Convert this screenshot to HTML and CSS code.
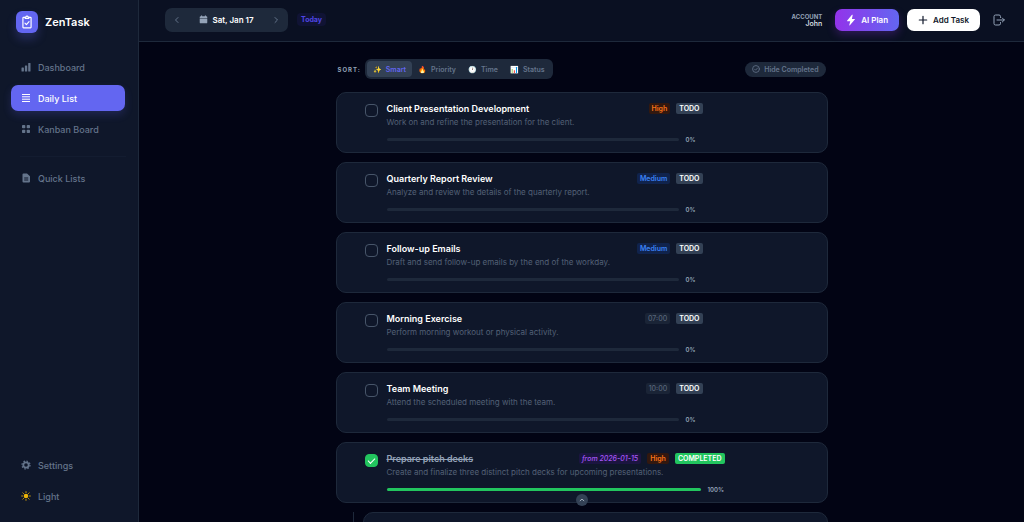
FILE: index.html
```html
<!DOCTYPE html>
<html lang="en">
<head>
  <meta charset="UTF-8">
  <meta name="viewport" content="width=device-width, initial-scale=1.0">
  <title>ZenTask</title>
  <link rel="stylesheet" href="styles.css">
</head>
<body>
  <div class="app">
    <aside class="sidebar">
      <div class="brand">
        <span class="logo">
          <svg viewBox="0 0 24 24" width="14" height="14" fill="none" stroke="currentColor" stroke-width="2" stroke-linecap="round" stroke-linejoin="round"><path d="M9 4H6a1 1 0 0 0-1 1v16a1 1 0 0 0 1 1h12a1 1 0 0 0 1-1V5a1 1 0 0 0-1-1h-3"/><path d="M9 6V3.500h1.500a1.500 1.500 0 0 1 3 0H15V6z"/><path d="M8.500 14l2.500 2.500 4.500-5"/></svg>
        </span>
        <span class="brand-name">ZenTask</span>
      </div>
      <nav class="nav">
        <a href="#" class="nav-item">
          <svg viewBox="0 0 10 10" width="10" height="10" fill="currentColor"><rect x="0.500" y="5.500" width="2.400" height="4" rx="0.500"/><rect x="3.900" y="3.500" width="2.300" height="6" rx="0.500"/><rect x="7.200" y="1" width="2.300" height="8.500" rx="0.500"/></svg>
          Dashboard
        </a>
        <a href="#" class="nav-item active">
          <svg viewBox="0 0 10 10" width="10" height="10" stroke="currentColor" stroke-width="1"><path d="M1 1.500h8M1 3.800h8M1 6.200h8M1 8.500h8"/></svg>
          Daily List
        </a>
        <a href="#" class="nav-item">
          <svg viewBox="0 0 10 10" width="10" height="10" fill="currentColor"><rect x="1" y="1" width="3.300" height="3.300" rx="0.800"/><rect x="5.700" y="1" width="3.300" height="3.300" rx="0.800"/><rect x="1" y="5.700" width="3.300" height="3.300" rx="0.800"/><rect x="5.700" y="5.700" width="3.300" height="3.300" rx="0.800"/></svg>
          Kanban Board
        </a>
        <hr class="nav-line">
        <a href="#" class="nav-item">
          <svg viewBox="0 0 10 10" width="10" height="10" fill="currentColor"><path fill-rule="evenodd" d="M2.500.5H6L9 3.300V8.500a1 1 0 0 1-1 1H2.500a1 1 0 0 1-1-1v-7a1 1 0 0 1 1-1zM3.200 4.500v.9h4v-.9zM3.200 6.600v.9h4v-.9z"/></svg>
          Quick Lists
        </a>
      </nav>
      <div class="nav nav-bottom">
        <a href="#" class="nav-item">
          <svg viewBox="0 0 10 10" width="10" height="10" fill="none" stroke="currentColor"><circle cx="5" cy="5" r="2.700" stroke-width="1.800"/><circle cx="5" cy="5" r="4" stroke-width="1.200" stroke-dasharray="1.570 1.570"/></svg>
          Settings
        </a>
        <button type="button" class="nav-item">
          <svg class="sun" viewBox="0 0 10 10" width="10" height="10" fill="currentColor" stroke="currentColor" stroke-linecap="round"><circle cx="5" cy="5" r="2.300" stroke="none"/><path stroke-width="0.900" d="M5 .7v.8M5 8.500v.8M.7 5h.8M8.500 5h.8M1.900 1.900l.6.6M7.500 7.500l.6.6M1.900 8.100l.6-.6M7.500 2.500l.6-.6"/></svg>
          Light
        </button>
      </div>
    </aside>

    <div class="page">
      <header class="topbar">
        <div class="date-picker">
          <button type="button" class="arrow" aria-label="Previous day"><svg viewBox="0 0 8 8" width="8" height="8" fill="none" stroke="currentColor" stroke-linecap="round" stroke-linejoin="round"><path d="M5 1.500L2.500 4 5 6.500"/></svg></button>
          <button type="button" class="date">
            <svg viewBox="0 0 10 10" width="9" height="9" fill="currentColor"><path d="M2.200.5h1.300v1h3v-1h1.300v1h.4a1 1 0 0 1 1 1v.9H.8v-.9a1 1 0 0 1 1-1h.4zM.8 3.800h8.400v4.500a1 1 0 0 1-1 1H1.800a1 1 0 0 1-1-1z"/></svg>
            Sat, Jan 17
          </button>
          <button type="button" class="arrow" aria-label="Next day"><svg viewBox="0 0 8 8" width="8" height="8" fill="none" stroke="currentColor" stroke-linecap="round" stroke-linejoin="round"><path d="M3 1.500L5.500 4 3 6.500"/></svg></button>
        </div>
        <button type="button" class="today">Today</button>
        <div class="account">
          <span class="account-label">ACCOUNT</span>
          <span class="account-name">John</span>
        </div>
        <button type="button" class="btn btn-ai">
          <svg viewBox="0 0 10 12" width="10" height="12" fill="currentColor"><path d="M6 .8L1.200 6.500c-.3.400-.1.700.3.700h2.700l-.9 3.900c0 .4.300.5.600.2l4.900-5.700c.3-.4.100-.7-.3-.7H5.900L6.700 1.100C6.700.7 6.300.5 6 .8z"/></svg>
          AI Plan
        </button>
        <button type="button" class="btn btn-add">
          <svg viewBox="0 0 10 10" width="10" height="10" stroke="currentColor" stroke-width="1.200" stroke-linecap="round"><path d="M5 1.300v7.400M1.300 5h7.400"/></svg>
          Add Task
        </button>
        <button type="button" class="logout" aria-label="Log out">
          <svg viewBox="0 0 12 12" width="12" height="12" fill="none" stroke="currentColor" stroke-linecap="round" stroke-linejoin="round"><path d="M7.500 3.500V2.500a1.500 1.500 0 0 0-1.500-1.500H2.500A1.500 1.500 0 0 0 1 2.500v7A1.500 1.500 0 0 0 2.500 11H6a1.500 1.500 0 0 0 1.500-1.500v-1M4 6h7.300M9.300 4l2 2-2 2"/></svg>
        </button>
      </header>

      <main class="content">
        <div class="toolbar">
          <span class="sort-label">SORT:</span>
          <div class="sort">
            <button type="button" class="sort-btn selected"><span>✨</span>Smart</button>
            <button type="button" class="sort-btn"><span>🔥</span>Priority</button>
            <button type="button" class="sort-btn"><span>🕐</span>Time</button>
            <button type="button" class="sort-btn"><span>📊</span>Status</button>
          </div>
          <button type="button" class="hide-done">
            <svg viewBox="0 0 10 10" width="8" height="8" fill="none" stroke="currentColor" stroke-linecap="round" stroke-linejoin="round"><circle cx="5" cy="5" r="4.300"/><path d="M3.200 5.200l1.300 1.300 2.400-2.700"/></svg>
            Hide Completed
          </button>
        </div>

        <div class="task">
          <input type="checkbox" class="check" id="t1">
          <div class="task-body">
            <div class="task-head">
              <label class="task-title" for="t1">Client Presentation Development</label>
              <span class="tag high">High</span>
              <span class="tag status">TODO</span>
            </div>
            <p class="task-text">Work on and refine the presentation for the client.</p>
            <div class="progress"><div class="track"></div><span class="percent">0%</span></div>
          </div>
        </div>

        <div class="task">
          <input type="checkbox" class="check" id="t2">
          <div class="task-body">
            <div class="task-head">
              <label class="task-title" for="t2">Quarterly Report Review</label>
              <span class="tag medium">Medium</span>
              <span class="tag status">TODO</span>
            </div>
            <p class="task-text">Analyze and review the details of the quarterly report.</p>
            <div class="progress"><div class="track"></div><span class="percent">0%</span></div>
          </div>
        </div>

        <div class="task">
          <input type="checkbox" class="check" id="t3">
          <div class="task-body">
            <div class="task-head">
              <label class="task-title" for="t3">Follow-up Emails</label>
              <span class="tag medium">Medium</span>
              <span class="tag status">TODO</span>
            </div>
            <p class="task-text">Draft and send follow-up emails by the end of the workday.</p>
            <div class="progress"><div class="track"></div><span class="percent">0%</span></div>
          </div>
        </div>

        <div class="task">
          <input type="checkbox" class="check" id="t4">
          <div class="task-body">
            <div class="task-head">
              <label class="task-title" for="t4">Morning Exercise</label>
              <span class="tag time">07:00</span>
              <span class="tag status">TODO</span>
            </div>
            <p class="task-text">Perform morning workout or physical activity.</p>
            <div class="progress"><div class="track"></div><span class="percent">0%</span></div>
          </div>
        </div>

        <div class="task">
          <input type="checkbox" class="check" id="t5">
          <div class="task-body">
            <div class="task-head">
              <label class="task-title" for="t5">Team Meeting</label>
              <span class="tag time">10:00</span>
              <span class="tag status">TODO</span>
            </div>
            <p class="task-text">Attend the scheduled meeting with the team.</p>
            <div class="progress"><div class="track"></div><span class="percent">0%</span></div>
          </div>
        </div>

        <div class="task done">
          <input type="checkbox" class="check" id="t6" checked>
          <div class="task-body">
            <div class="task-head">
              <label class="task-title" for="t6">Prepare pitch decks</label>
              <span class="tag from">from 2026-01-15</span>
              <span class="tag high">High</span>
              <span class="tag status">COMPLETED</span>
            </div>
            <p class="task-text">Create and finalize three distinct pitch decks for upcoming presentations.</p>
            <div class="progress"><div class="track"><div class="fill" style="width: 100%"></div></div><span class="percent">100%</span></div>
          </div>
          <button type="button" class="collapse" aria-label="Collapse subtasks"><svg viewBox="0 0 8 8" width="6" height="6" fill="none" stroke="currentColor" stroke-linecap="round" stroke-linejoin="round"><path d="M1.500 5L4 2.800 6.500 5"/></svg></button>
        </div>

        <div class="subtasks">
          <div class="task"></div>
        </div>
      </main>
    </div>
  </div>
</body>
</html>
```
FILE: styles.css
```css
* {
  box-sizing: border-box;
}
body {
  margin: 0;
  background: #020414;
  color: #fff;
  font-family: Inter, "Liberation Sans", sans-serif;
  font-size: 9px;
}
button {
  font: inherit;
  color: inherit;
  background: none;
  border: 0;
  padding: 0;
  cursor: pointer;
}
svg {
  flex: none;
  display: block;
}
.app {
  display: flex;
  height: 100vh;
  overflow: hidden;
}

/* sidebar */
.sidebar {
  width: 139px;
  flex: none;
  display: flex;
  flex-direction: column;
  padding: 11px 13px 13px 11px;
  background: #0f172a;
  border-right: 1px solid #1e293b;
}
.brand {
  display: flex;
  align-items: center;
  gap: 7px;
  padding-left: 5px;
  margin-bottom: 21px;
}
.logo {
  display: flex;
  align-items: center;
  justify-content: center;
  width: 22px;
  height: 22px;
  border-radius: 6px;
  background: #6366f1;
  box-shadow: 0 6px 10px rgba(99, 102, 241, 0.25);
}
.brand-name {
  font-size: 11px;
  font-weight: 600;
}
.nav {
  display: flex;
  flex-direction: column;
  gap: 5px;
}
.nav-bottom {
  margin-top: auto;
}
.nav-item {
  display: flex;
  align-items: center;
  gap: 7px;
  height: 26px;
  padding: 0 10px;
  border-radius: 7px;
  color: #64748b;
  font-weight: 500;
  text-decoration: none;
}
.nav-item.active {
  background: #6366f1;
  color: #fff;
  box-shadow: 0 4px 8px rgba(99, 102, 241, 0.2);
}
.nav-line {
  width: 106px;
  margin: 9px 0 3px 9px;
  border: 0;
  border-top: 1px solid #131c30;
}
.sun {
  color: #eab308;
}

/* top bar */
.page {
  flex: 1;
  min-width: 0;
  display: flex;
  flex-direction: column;
}
.topbar {
  flex: none;
  display: flex;
  align-items: center;
  height: 42px;
  padding: 0 19px 2px 26px;
  background: #0a1022;
  border-bottom: 1px solid #1e293b;
}
.date-picker {
  display: flex;
  align-items: center;
  justify-content: space-between;
  width: 123px;
  height: 24px;
  padding: 0 8px;
  border-radius: 7px;
  background: #1e293b;
}
.arrow {
  color: #64748b;
}
.date {
  display: flex;
  align-items: center;
  gap: 4px;
  font-size: 8px;
  font-weight: 600;
}
.date svg {
  color: #94a3b8;
}
.today {
  margin-left: 9px;
  padding: 2px 4px;
  border-radius: 4px;
  background: #101334;
  color: #4f46e5;
  font-size: 7px;
  font-weight: 700;
}
.account {
  display: flex;
  flex-direction: column;
  align-items: flex-end;
  margin-left: auto;
  margin-right: 13px;
  line-height: 7px;
}
.account-label {
  color: #94a3b8;
  font-size: 6px;
  font-weight: 700;
}
.account-name {
  color: #e2e8f0;
  font-size: 7px;
  font-weight: 500;
}
.btn {
  display: flex;
  align-items: center;
  gap: 5px;
  height: 22px;
  padding: 0 11px;
  border-radius: 7px;
  font-size: 8px;
  font-weight: 600;
}
.btn-ai {
  background: linear-gradient(90deg, #9333ea, #6366f1);
  box-shadow: 0 4px 8px rgba(147, 51, 234, 0.25);
}
.btn-add {
  margin-left: 8px;
  background: #fff;
  color: #0f172a;
}
.logout {
  margin-left: 13px;
  color: #94a3b8;
}

/* list */
.content {
  width: 100%;
  max-width: 492px;
  margin: 0 auto;
  padding-top: 17px;
}
.toolbar {
  display: flex;
  align-items: center;
  height: 20px;
  margin-bottom: 13px;
  padding: 0 2px;
}
.sort-label {
  color: #94a3b8;
  font-size: 6px;
  font-weight: 700;
  letter-spacing: 1px;
}
.sort {
  display: flex;
  align-items: center;
  height: 20px;
  margin-left: 4px;
  padding: 0 2px;
  border-radius: 6px;
  background: #1e293b;
}
.sort-btn {
  display: flex;
  align-items: center;
  gap: 4px;
  height: 16px;
  padding: 0 6px;
  border-radius: 4px;
  color: #64748b;
  font-size: 7px;
  font-weight: 600;
}
.sort-btn.selected {
  background: #334155;
  color: #6366f1;
}
.hide-done {
  display: flex;
  align-items: center;
  gap: 4px;
  height: 15px;
  margin-left: auto;
  padding: 0 7px;
  border-radius: 8px;
  background: #1e293b;
  color: #64748b;
  font-size: 7px;
  font-weight: 600;
}
.task {
  position: relative;
  display: flex;
  align-items: flex-start;
  gap: 9px;
  min-height: 61px;
  margin-bottom: 9px;
  padding: 9px 124px 9px 28px;
  border: 1px solid #1e293b;
  border-radius: 10px;
  background: #0f172a;
}
.task.done {
  padding-right: 102px;
}
.check {
  appearance: none;
  flex: none;
  width: 13px;
  height: 13px;
  margin: 2px 0 0;
  border: 1px solid #475569;
  border-radius: 4px;
}
.check:checked {
  border-color: #22c55e;
  background: #22c55e;
  display: flex;
  align-items: center;
  justify-content: center;
}
.check:checked::before {
  content: "";
  width: 6px;
  height: 3px;
  margin-bottom: 2px;
  border: solid #fff;
  border-width: 0 0 1px 1px;
  transform: rotate(-45deg);
}
.task-body {
  flex: 1;
  min-width: 0;
}
.task-head {
  display: flex;
  align-items: center;
  gap: 6px;
  height: 13px;
}
.task-title {
  margin-right: auto;
  font-weight: 600;
}
.tag {
  height: 11px;
  padding: 0 3px;
  border-radius: 2px;
  font-size: 7px;
  font-weight: 600;
  line-height: 11px;
}
.high {
  background: #32180f;
  color: #f97316;
}
.medium {
  background: #10234c;
  color: #3b82f6;
}
.time {
  background: #1a2436;
  color: #566378;
  font-weight: 500;
}
.from {
  background: #1b1540;
  color: #a855f7;
  font-style: italic;
  font-weight: 500;
}
.status {
  background: #334155;
  color: #fff;
}
.task-text {
  margin: 2px 0 0;
  color: #536076;
  font-size: 8px;
  line-height: 10px;
}
.progress {
  display: flex;
  align-items: center;
  gap: 7px;
  height: 8px;
  margin-top: 8px;
}
.track {
  flex: 1;
  height: 3px;
  border-radius: 2px;
  background: #1e293b;
}
.fill {
  height: 100%;
  border-radius: 2px;
  background: #22c55e;
}
.percent {
  width: 17px;
  color: #94a3b8;
  font-size: 6px;
  font-weight: 600;
}
.done .task-title {
  color: #94a3b8;
  text-decoration: line-through;
}
.done .status {
  background: #22c55e;
}
.collapse {
  position: absolute;
  bottom: -4px;
  left: 50%;
  display: flex;
  align-items: center;
  justify-content: center;
  width: 12px;
  height: 12px;
  margin-left: -6px;
  border-radius: 50%;
  background: #334155;
  color: #cbd5e1;
}
.subtasks {
  margin-left: 17px;
  padding-left: 9px;
  border-left: 1px solid #1e293b;
}
```
